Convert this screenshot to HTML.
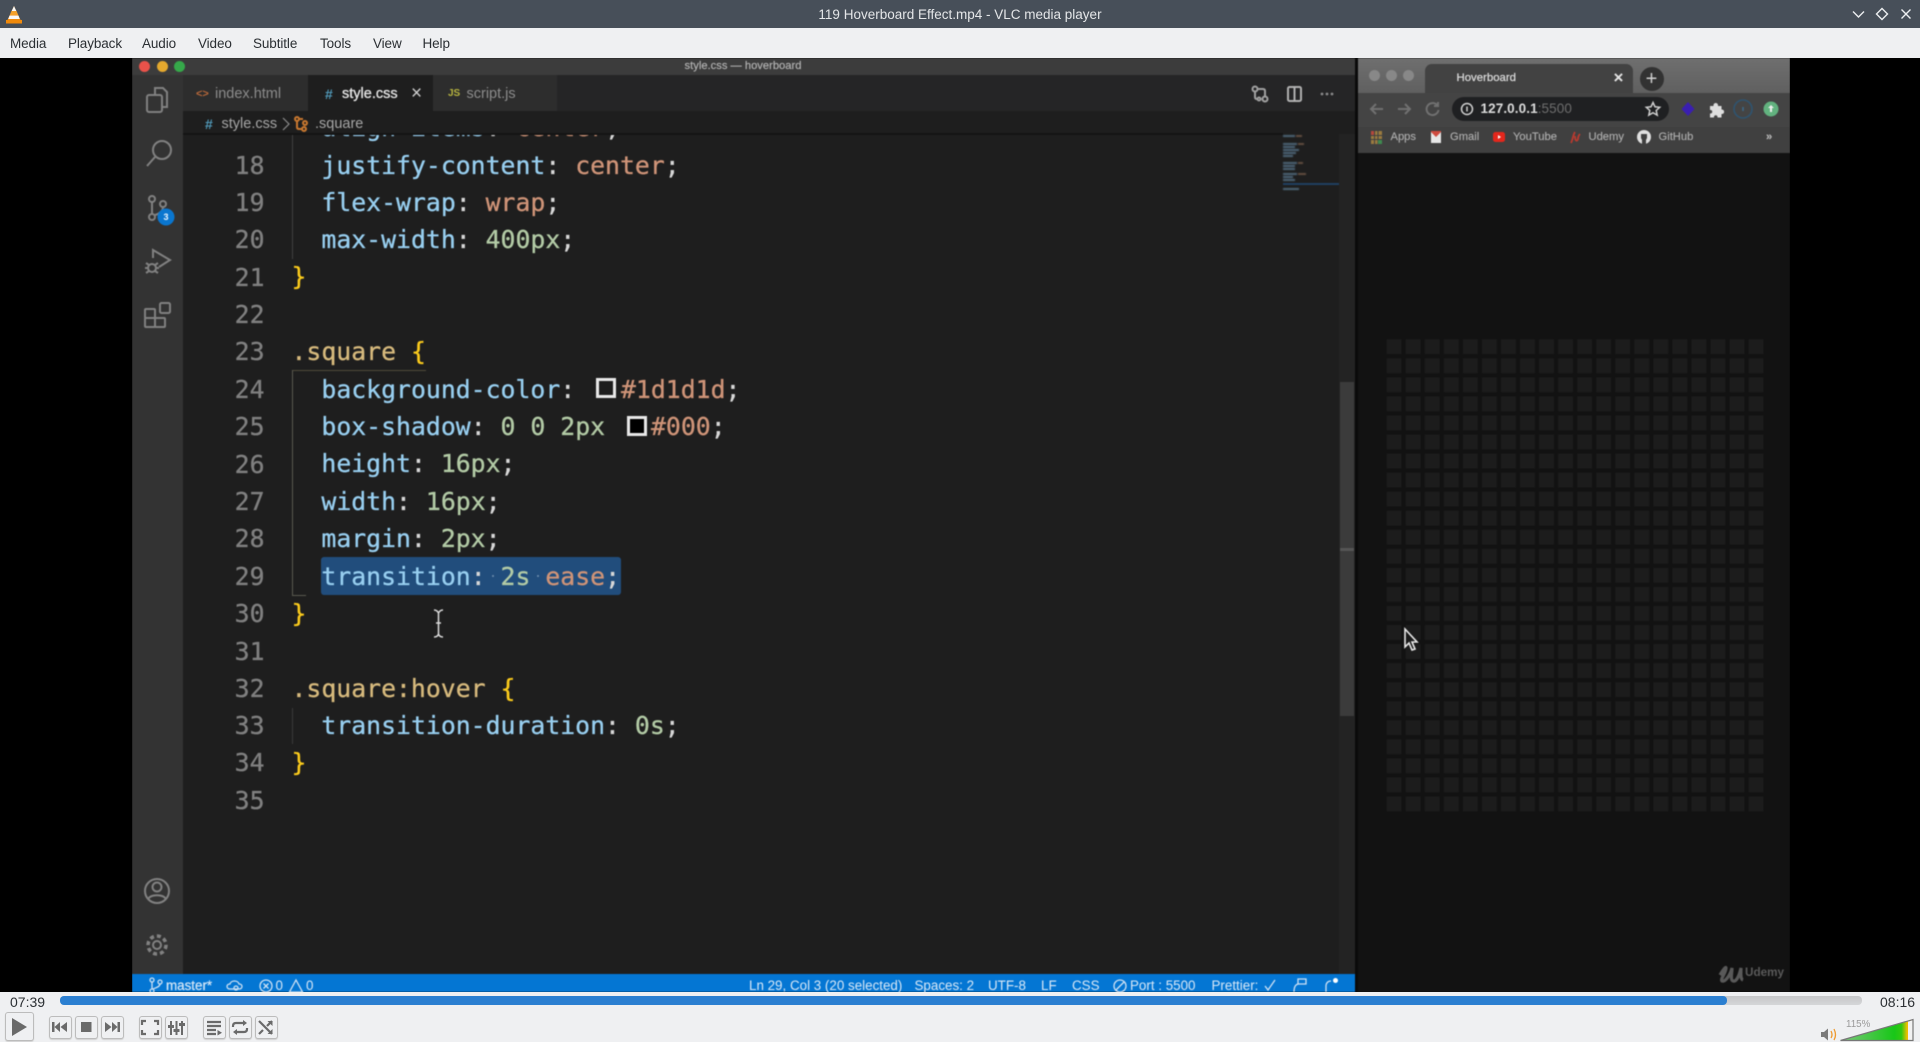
<!DOCTYPE html>
<html><head><meta charset="utf-8"><title>VLC media player</title>
<style>
html,body{margin:0;padding:0;width:1920px;height:1042px;overflow:hidden;background:#eff0f2;font-family:"Liberation Sans",sans-serif}
.a{position:absolute;white-space:pre}
#title{left:0;top:0;width:1920px;height:28px;background:#474f59}
#menu{left:0;top:28px;width:1920px;height:30px;background:#eff0f2}
.m{top:35px;font-size:13.5px;line-height:17px;color:#2b2f33;letter-spacing:-.1px}
#video{left:0;top:58px;width:1920px;height:934px;background:#000;overflow:hidden}
#clip{left:132px;top:0;width:1658px;height:934px;overflow:hidden}
#inner{left:-132px;top:-58px;width:1920px;height:1042px;filter:blur(.55px)}
.code{font-family:"DejaVu Sans Mono","Liberation Mono",monospace;font-size:24.8px;line-height:37.4px;height:37.4px;-webkit-text-stroke:.3px}
.ln{color:#808080;left:225px;width:39.5px;text-align:right}
.p{color:#98cff0}.v{color:#cf9478}.n{color:#b3cba6}.s{color:#d7ba7d}.b{color:#fbcb1c}.o{color:#d8d8d8}
.st{top:977px;font-size:13.4px;line-height:18px;color:#d9e9f8}
.bm{top:129px;font-size:11.2px;line-height:16px;color:#adadad;-webkit-text-stroke:.15px #adadad}
.btn{position:absolute;box-sizing:border-box;border:1px solid #bcbcbc;border-radius:3px;background:#eff0f2;box-shadow:0 1px 1px #d0d0d0}
</style></head><body>

<div class="a" id="title"></div>
<div class="a" style="left:0;top:6px;width:1920px;text-align:center;font-size:13.5px;line-height:18px;color:#e4e6e8">119 Hoverboard Effect.mp4 - VLC media player</div>
<div class="a" id="menu"></div>
<div class="a m" style="left:10px">Media</div>
<div class="a m" style="left:68px">Playback</div>
<div class="a m" style="left:142px">Audio</div>
<div class="a m" style="left:198px">Video</div>
<div class="a m" style="left:253px">Subtitle</div>
<div class="a m" style="left:320px">Tools</div>
<div class="a m" style="left:373px">View</div>
<div class="a m" style="left:422.5px">Help</div>

<div class="a" id="video">
<div class="a" id="clip"><div class="a" id="inner">
  <!-- VS Code -->
  <div class="a" style="left:132px;top:58px;width:1223px;height:934px;background:#1e1e1e"></div>
  <div class="a" style="left:132px;top:58px;width:1223px;height:17px;background:#3c3c3c"></div>
  <div class="a" style="left:132px;top:75px;width:51px;height:917px;background:#333"></div>
  <div class="a" style="left:183px;top:75px;width:1172px;height:36px;background:#252526"></div>
  <div class="a" style="left:183px;top:75px;width:125px;height:36px;background:#2d2d2d"></div>
  <div class="a" style="left:308px;top:75px;width:125px;height:36px;background:#1e1e1e"></div>
  <div class="a" style="left:433px;top:75px;width:124px;height:36px;background:#2d2d2d"></div>
  <div class="a" style="left:183px;top:111px;width:1172px;height:23px;background:#1e1e1e"></div>
  <div class="a" style="left:668px;top:59px;width:150px;font-size:11.2px;line-height:15px;text-align:center;color:#b4b4b4;-webkit-text-stroke:.15px #b4b4b4">style.css — hoverboard</div>
  <div class="a" style="left:139px;top:60.5px;width:11px;height:11px;border-radius:50%;background:#e9524a"></div>
  <div class="a" style="left:156.5px;top:60.5px;width:11px;height:11px;border-radius:50%;background:#e4a82e"></div>
  <div class="a" style="left:174px;top:60.5px;width:11px;height:11px;border-radius:50%;background:#36a84a"></div>

  <div class="a" style="left:196px;top:85px;font-size:11px;line-height:18px;color:#b5673a;font-weight:bold">&lt;&gt;</div>
  <div class="a" style="left:215px;top:85px;font-size:14.5px;line-height:18px;color:#8c8c8c">index.html</div>
  <div class="a" style="left:325px;top:85px;font-size:14px;line-height:18px;color:#519aba;font-weight:bold">#</div>
  <div class="a" style="left:342px;top:85px;font-size:14.5px;line-height:18px;color:#e6e6e6;-webkit-text-stroke:.3px #e6e6e6">style.css</div>
  <div class="a" style="left:411px;top:84px;font-size:19px;line-height:20px;color:#cfcfcf">×</div>
  <div class="a" style="left:448px;top:87px;font-size:10px;line-height:14px;color:#b8b53f;font-weight:bold">JS</div>
  <div class="a" style="left:466.5px;top:85px;font-size:14.5px;line-height:18px;color:#8c8c8c">script.js</div>

  <div class="a" style="left:205px;top:115px;font-size:14px;line-height:18px;color:#519aba;font-weight:bold">#</div>
  <div class="a" style="left:221.5px;top:115px;font-size:14.5px;line-height:18px;color:#a6a6a6">style.css</div>
  <div class="a" style="left:315px;top:115px;font-size:14.5px;line-height:18px;color:#a6a6a6">.square</div>

  <!-- editor -->
  <div class="a" style="left:183px;top:134px;width:1172px;height:840px;overflow:hidden">
   <div class="a" style="left:-183px;top:-134px;width:1400px;height:1000px">
    <div class="a code" style="left:321.4px;top:108.9px"><span class="p">align-items</span><span class="o">: </span><span class="v">center</span><span class="o">;</span></div>
    <div class="a code ln" style="top:146.6px">18</div>
    <div class="a code ln" style="top:183.9px">19</div>
    <div class="a code ln" style="top:221.2px">20</div>
    <div class="a code ln" style="top:258.5px">21</div>
    <div class="a code ln" style="top:295.9px">22</div>
    <div class="a code ln" style="top:333.3px">23</div>
    <div class="a code ln" style="top:370.7px">24</div>
    <div class="a code ln" style="top:408.1px">25</div>
    <div class="a code ln" style="top:445.5px">26</div>
    <div class="a code ln" style="top:482.9px">27</div>
    <div class="a code ln" style="top:520.3px">28</div>
    <div class="a code ln" style="top:557.7px">29</div>
    <div class="a code ln" style="top:595.1px">30</div>
    <div class="a code ln" style="top:632.5px">31</div>
    <div class="a code ln" style="top:669.9px">32</div>
    <div class="a code ln" style="top:707.3px">33</div>
    <div class="a code ln" style="top:744.2px">34</div>
    <div class="a code ln" style="top:782.1px">35</div>

    <div class="a" style="left:321px;top:557px;width:300px;height:38px;background:#214d7c;border-radius:3px"></div>
    <div class="a" style="left:492px;top:575px;width:2px;height:2px;border-radius:50%;background:#6d8fae"></div>
    <div class="a" style="left:537px;top:575px;width:2px;height:2px;border-radius:50%;background:#6d8fae"></div>

    <div class="a code" style="left:321.4px;top:146.6px"><span class="p">justify-content</span><span class="o">: </span><span class="v">center</span><span class="o">;</span></div>
    <div class="a code" style="left:321.4px;top:183.9px"><span class="p">flex-wrap</span><span class="o">: </span><span class="v">wrap</span><span class="o">;</span></div>
    <div class="a code" style="left:321.4px;top:221.2px"><span class="p">max-width</span><span class="o">: </span><span class="n">400px</span><span class="o">;</span></div>
    <div class="a code b" style="left:291.5px;top:258px">}</div>
    <div class="a code" style="left:291.5px;top:333.3px"><span class="s">.square </span><span class="b">{</span></div>
    <div class="a code" style="left:321.4px;top:370.7px"><span class="p">background-color</span><span class="o">: </span></div>
    <div class="a" style="left:596px;top:378px;width:14px;height:14px;border:3px solid #e8e8e8;background:#1d1d1d"></div>
    <div class="a code v" style="left:621px;top:370.7px">#1d1d1d<span class="o">;</span></div>
    <div class="a code" style="left:321.4px;top:408.1px"><span class="p">box-shadow</span><span class="o">: </span><span class="n">0 0 2px</span></div>
    <div class="a" style="left:627px;top:416px;width:14px;height:14px;border:3px solid #e8e8e8;background:#000"></div>
    <div class="a code v" style="left:651px;top:408.1px">#000<span class="o">;</span></div>
    <div class="a code" style="left:321.4px;top:445.2px"><span class="p">height</span><span class="o">: </span><span class="n">16px</span><span class="o">;</span></div>
    <div class="a code" style="left:321.4px;top:482.9px"><span class="p">width</span><span class="o">: </span><span class="n">16px</span><span class="o">;</span></div>
    <div class="a code" style="left:321.4px;top:520.3px"><span class="p">margin</span><span class="o">: </span><span class="n">2px</span><span class="o">;</span></div>
    <div class="a code" style="left:321.4px;top:557.7px"><span class="p">transition</span><span class="o">: </span><span class="n">2s </span><span class="v">ease</span><span class="o">;</span></div>
    <div class="a code b" style="left:291.5px;top:594.6px">}</div>
    <div class="a code" style="left:291.5px;top:669.9px"><span class="s">.square:hover </span><span class="b">{</span></div>
    <div class="a code" style="left:321.4px;top:707.3px"><span class="p">transition-duration</span><span class="o">: </span><span class="n">0s</span><span class="o">;</span></div>
    <div class="a code b" style="left:291.5px;top:744.2px">}</div>

    <!-- guides -->
    <div class="a" style="left:292px;top:134px;width:1px;height:125px;background:#404040"></div>
    <div class="a" style="left:292px;top:370px;width:134px;height:1px;background:#504a3a"></div>
    <div class="a" style="left:292px;top:370px;width:1px;height:225px;background:#5a5a50"></div>
    <div class="a" style="left:292px;top:595px;width:14px;height:1px;background:#5a5a50"></div>
    <div class="a" style="left:292px;top:708px;width:1px;height:36px;background:#3a3a3a"></div>
   </div>
  </div>
  <div class="a" style="left:183px;top:133px;width:1100px;height:2px;background:#131313"></div>

  <!-- minimap & scrollbar -->
  <div class="a" style="left:1339px;top:134px;width:16px;height:840px;background:#232323"></div>
  <div class="a" style="left:1340px;top:382px;width:14px;height:334px;background:#3b3b3b"></div>
  <div class="a" style="left:1340px;top:548px;width:14px;height:3px;background:#555"></div>
  <div class="a" style="left:1283px;top:183px;width:56px;height:1.5px;background:#1f3f60"></div>
  <svg class="a" style="left:0;top:0;filter:blur(.5px)" width="1920" height="1042" fill="none">
    <g stroke="#4d6678" stroke-width="2"><path d="M1283 136h12M1283 144h14M1283 147h12M1283 150h16M1283 153h13M1283 156h10M1283 163h14M1283 166h12M1283 169h12M1283 174h14M1283 177h10M1283 180h12M1283 189h16"/></g>
    <g stroke="#7a5e4c" stroke-width="1.5"><path d="M1296 136h6M1298 144h6M1298 163h5M1298 174h8"/></g>
  </svg>
  <svg class="a" style="left:0;top:0" width="1920" height="1042" fill="none">
    <!-- activity icons -->
    <g stroke="#818181" stroke-width="2">
      <rect x="147" y="95" width="15" height="17" rx="2"/>
      <path d="M155 95v-7h8l4 4v15h-5"/>
      <circle cx="162" cy="150" r="9"/><path d="M155 157l-8 9"/>
      <circle cx="152" cy="199" r="3"/><circle cx="163" cy="204" r="3"/><circle cx="152" cy="217" r="3"/><path d="M152 202v12M163 207c0 4-4 7-8 8"/>
      <path d="M153 258v-8l17 10-11 7"/><circle cx="152" cy="268" r="4"/><path d="M146 263l3 2M158 263l-3 2M145 268h3M156 268h3M146 273l3-2M158 273l-3-2"/>
      <rect x="145" y="309" width="10" height="9" rx="1"/><rect x="145" y="318" width="10" height="9" rx="1"/><rect x="155" y="318" width="10" height="9" rx="1"/><rect x="160" y="303" width="10" height="10" rx="1.5"/>
      <circle cx="157" cy="891" r="12"/><circle cx="157" cy="887" r="4.5"/><path d="M148 899c3-5 15-5 18 0"/>
      <circle cx="157" cy="945" r="4"/>
      <circle cx="157" cy="945" r="9" stroke-width="3.5" stroke-dasharray="4 3"/>
      <circle cx="1255" cy="89" r="2.5" stroke="#a0a0a0"/><circle cx="1265" cy="99" r="2.5" stroke="#a0a0a0"/><circle cx="1259" cy="99" r="1.5" stroke="#a0a0a0"/>
      <path d="M1255 92v5q0 2 2 2M1265 96v-5q0-2-2-2h-5" stroke="#a0a0a0"/>
      <rect x="1288" y="87" width="13" height="14" rx="1.5" stroke="#b0b0b0"/><path d="M1294.5 87v14" stroke="#b0b0b0"/>
    </g>
    <circle cx="166" cy="217" r="8.5" fill="#0a76cf"/>
    <g fill="#8a8a8a"><circle cx="1322" cy="94" r="1.4"/><circle cx="1327" cy="94" r="1.4"/><circle cx="1332" cy="94" r="1.4"/></g>
    <path d="M283 118l6 6-6 6" stroke="#8c8c8c" stroke-width="1.2"/>
    <g stroke="#c7772f" stroke-width="2"><circle cx="297" cy="119" r="2"/><circle cx="305" cy="123" r="2"/><circle cx="304" cy="129" r="2"/><path d="M299 119h4M297 121v6q0 2 2 2h3"/></g>
  </svg>
  <div class="a" style="left:162px;top:210.5px;width:8px;font-size:9px;line-height:13px;text-align:center;color:#e9f4ff;font-weight:bold">3</div>

  <!-- status bar -->
  <div class="a" style="left:132px;top:974px;width:1223px;height:18px;background:#0476d3"></div>
  <div class="a st" style="left:166px;-webkit-text-stroke:.2px #d9e9f8">master*</div>
  <div class="a st" style="left:275.5px">0</div>
  <div class="a st" style="left:306px">0</div>
  <div class="a st" style="left:749px">Ln 29, Col 3 (20 selected)</div>
  <div class="a st" style="left:914.5px">Spaces: 2</div>
  <div class="a st" style="left:988px">UTF-8</div>
  <div class="a st" style="left:1041px">LF</div>
  <div class="a st" style="left:1072px">CSS</div>
  <div class="a st" style="left:1130px">Port : 5500</div>
  <div class="a st" style="left:1211.5px">Prettier:</div>
  <svg class="a" style="left:0;top:0" width="1920" height="1042" fill="none" stroke="#cfe2f5" stroke-width="1.3">
    <circle cx="152" cy="980" r="2"/><circle cx="152" cy="991" r="2"/><circle cx="160" cy="982" r="2"/><path d="M152 982v7M160 984c0 3-5 4-7 5"/>
    <path d="M230 989c-4 0-4-5 0-5 1-4 8-4 9 0 4 0 4 5 0 5z"/><circle cx="236" cy="988" r="2"/>
    <circle cx="266" cy="986" r="6"/><path d="M263.5 983.5l5 5M268.5 983.5l-5 5"/>
    <path d="M296 980l6.5 12h-13z"/>
    <circle cx="1120" cy="986" r="6"/><path d="M1116 990l8-8"/>
    <path d="M1265 986l3 4 7-10"/>
    <path d="M1298 984h8v-5h-8zM1294 992c0-4 1-8 5-8"/>
    <path d="M1326 992v-6c0-3 2-5 5-5"/>
  </svg>
  <div class="a" style="left:1333px;top:978px;width:5px;height:5px;border-radius:50%;background:#fff"></div>
  <div class="a" style="left:1355px;top:58px;width:3px;height:934px;background:#0a0a0a"></div>

  <!-- Chrome -->
  <div class="a" style="left:1358px;top:58px;width:432px;height:35px;background:linear-gradient(#6f6f6f,#606060)"></div>
  <div class="a" style="left:1358px;top:93px;width:432px;height:34px;background:#444"></div>
  <div class="a" style="left:1358px;top:127px;width:432px;height:26px;background:#404040"></div>
  <div class="a" style="left:1358px;top:153px;width:432px;height:839px;background:#121212"></div>
  <div class="a" style="left:1368.5px;top:70px;width:11px;height:11px;border-radius:50%;background:#888"></div>
  <div class="a" style="left:1385.5px;top:70px;width:11px;height:11px;border-radius:50%;background:#888"></div>
  <div class="a" style="left:1403px;top:70px;width:11px;height:11px;border-radius:50%;background:#888"></div>
  <div class="a" style="left:1425px;top:64px;width:208px;height:29px;background:#424242;border-radius:7px 7px 0 0"></div>
  <div class="a" style="left:1456.5px;top:70px;font-size:11.4px;line-height:16px;color:#dedede;-webkit-text-stroke:.2px #dedede">Hoverboard</div>
  <div class="a" style="left:1613.5px;top:68px;font-size:17px;line-height:20px;color:#e6e6e6;font-weight:bold">×</div>
  <div class="a" style="left:1639.5px;top:67px;width:24px;height:24px;border-radius:50%;background:#323232"></div>
  <div class="a" style="left:1645px;top:68px;width:13px;text-align:center;font-size:20px;line-height:22px;color:#d0d0d0">+</div>
  <div class="a" style="left:1452px;top:97px;width:217px;height:24px;border-radius:12px;background:#1f2022"></div>
  <div class="a" style="left:1480.5px;top:101px;font-size:13.5px;line-height:16px;font-weight:bold;color:#dcdcdc;letter-spacing:.1px">127.0.0.1<span style="color:#6e6e6e;font-weight:normal">:5500</span></div>
  <div class="a bm" style="left:1390.5px">Apps</div>
  <div class="a bm" style="left:1450px">Gmail</div>
  <div class="a bm" style="left:1513px">YouTube</div>
  <div class="a bm" style="left:1588.5px">Udemy</div>
  <div class="a bm" style="left:1658.5px">GitHub</div>
  <div class="a bm" style="left:1766px;color:#bbb;font-weight:bold">»</div>
  <svg class="a" style="left:0;top:0" width="1920" height="1042" fill="none">
    <defs><pattern id="g" x="1386.7" y="339.3" width="19.05" height="19.05" patternUnits="userSpaceOnUse"><rect x="0" y="0" width="14.8" height="14.8" fill="#1c1c1c"/></pattern></defs>
    <rect x="1386" y="339" width="378" height="473" fill="url(#g)"/>
    <g stroke="#707070" stroke-width="2"><path d="M1383 109h-12m5-5l-5 5 5 5M1398 109h12m-5-5l5 5-5 5"/><path d="M1437 105a6 6 0 1 0 1.5 5M1438 102v4h-4"/></g>
    <circle cx="1467" cy="109" r="5.5" stroke="#d0d0d0" stroke-width="1.5"/><path d="M1467 106.5v5" stroke="#d0d0d0" stroke-width="1.5"/>
    <path d="M1653 102.5l2 4.3 4.7.5-3.5 3.2 1 4.600-4.200-2.400-4.200 2.400 1-4.600-3.500-3.200 4.700-.5z" stroke="#cfcfcf" stroke-width="1.5"/>
    <path d="M1688 102l6.500 7-6.500 7-6.500-7z" fill="#3a1fb0"/>
    <path d="M1710 106h3.500c-.5-4 5-4 4.500 0h3.500v3.500c3.500-.5 3.500 5 0 4.500v3.500h-4c.5-3-4-3-3.500 0h-4v-4c3 .5 3-4 0-3.500z" fill="#dedede"/>
    <circle cx="1743" cy="109" r="9" stroke="#2f5470" stroke-width="1.6"/><path d="M1743 107v4" stroke="#3b6b8e" stroke-width="1.5"/>
    <circle cx="1771" cy="109" r="7.500" fill="#62b27f"/><path d="M1771 105l-3 3h2v4h2v-4h2z" fill="#eee"/>
    <g><rect x="1371" y="131" width="11" height="13" fill="#9a7a3f"/><path d="M1374.500 131v13M1378 131v13" stroke="#404040"/><path d="M1371 135.500h11M1371 139.500h11" stroke="#404040"/><rect x="1371" y="131" width="3" height="4" fill="#b5473c"/><rect x="1378" y="140" width="4" height="4" fill="#3f8a4f"/></g>
    <rect x="1431" y="132" width="10" height="11" fill="#e7e7e7"/><path d="M1431 132l5 5 5-5v-1h-10z" fill="#cf4a3e"/>
    <rect x="1493" y="132" width="12" height="10" rx="2.500" fill="#e3271c"/><path d="M1498 135v4l3-2z" fill="#fff"/>
    <path d="M1571 143c2-4 2-8 4-11M1575 136c0 5 2 6 3 3 0-2 1-4 2-5" stroke="#b93a2f" stroke-width="1.800"/>
    <circle cx="1644" cy="137" r="7" fill="#e0e0e0"/><path d="M1641 134h6v4l-1 2v4h-4v-4l-1-2z" fill="#404040"/>
    <path d="M1720 975c3-5 6-9 6-7 0 5-6 11-4 13 3 1 8-5 10-13 0 5-2 12 1 13 3 1 6-4 8-13 0 4-1 11 2 12" stroke="#595959" stroke-width="3.200"/>
    <!-- mouse -->
    <path d="M1405 629v18l4-4 3 7 3-1-3-7h5z" fill="#1a1a1a" stroke="#e8e8e8" stroke-width="1.600"/>
    <path d="M434 610q3 0 4.500 3v21q-1 3-4.500 3M443 610q-3 0-4.500 3v21q1 3 4.500 3M436 623h5" stroke="#dcdcdc" stroke-width="1.500"/>
  </svg>
  <div class="a" style="left:1745px;top:964px;font-size:11.700px;line-height:18px;font-weight:bold;color:#5a5a5a">Udemy</div>
</div></div>
</div>

<!-- window controls -->
<svg class="a" style="left:0;top:0" width="1920" height="1042" fill="none">
  <path d="M14 6L6 23h16z" fill="#f08a0c"/><path d="M14 6l-3.500 7.500h7z" fill="#f8f8f8"/><path d="M11.500 11h5l1.500 4h-8z" fill="#f4a02a"/><path d="M9.600 15.500h8.800l1.400 3.500H8.200z" fill="#f8f8f8"/><rect x="6" y="20" width="16" height="3.500" fill="#f08a0c"/>
  <g stroke="#eceef0" stroke-width="1.400">
    <path d="M1853 11.500l5.500 5.500 5.500-5.500"/><path d="M1882 8.500l5.500 5.500-5.500 5.500-5.500-5.500z"/><path d="M1901.500 9.500l9 9M1910.500 9.500l-9 9"/>
  </g>
</svg>

<!-- seek -->
<div class="a" style="left:0;top:992px;width:1920px;height:50px;background:#eff0f2"></div>
<div class="a" style="left:10px;top:993px;font-size:14px;line-height:18px;color:#2b2f33">07:39</div>
<div class="a" style="left:60px;top:996px;width:1802px;height:9px;border-radius:4px;background:linear-gradient(#c6c7c9,#d5d6d8)"></div>
<div class="a" style="left:60px;top:996px;width:1667px;height:9px;border-radius:4px;background:#2b7fd1"></div>
<div class="a" style="left:1880px;top:993px;font-size:14px;line-height:18px;color:#2b2f33">08:16</div>

<!-- buttons -->
<div class="btn" style="left:5px;top:1012px;width:29px;height:29px"></div>
<div class="btn" style="left:48.500px;top:1015.500px;width:23px;height:23px"></div>
<div class="btn" style="left:74.500px;top:1015.500px;width:23px;height:23px"></div>
<div class="btn" style="left:100.500px;top:1015.500px;width:23px;height:23px"></div>
<div class="btn" style="left:138.500px;top:1015.500px;width:23px;height:23px"></div>
<div class="btn" style="left:164.500px;top:1015.500px;width:23px;height:23px"></div>
<div class="btn" style="left:202.500px;top:1015.500px;width:23px;height:23px"></div>
<div class="btn" style="left:228.500px;top:1015.500px;width:23px;height:23px"></div>
<div class="btn" style="left:254.500px;top:1015.500px;width:23px;height:23px"></div>
<svg class="a" style="left:0;top:0" width="1920" height="1042" fill="none">
  <defs><linearGradient id="vol" x1="0" x2="1"><stop offset="0" stop-color="#7ac77a"/><stop offset=".74" stop-color="#18c718"/><stop offset=".84" stop-color="#30c810"/><stop offset=".92" stop-color="#f0c000"/><stop offset="1" stop-color="#f58200"/></linearGradient></defs>
  <path d="M12 1018v18l15-9z" fill="#6a6a6a"/>
  <g fill="#6a6a6a">
    <path d="M52 1022h2.500v10H52zM60 1022v10l-5.500-5zM67 1022v10l-6.500-5z"/>
    <rect x="81" y="1022" width="10.500" height="10"/>
    <path d="M120 1022h-2.500v10h2.500zM112 1022v10l5.500-5zM105 1022v10l6.500-5z"/>
    <path d="M171 1021v14M176.500 1021v14M182 1021v14" stroke="#6a6a6a" stroke-width="2"/>
    <rect x="168" y="1025" width="6" height="3"/><rect x="173.500" y="1029" width="6" height="3"/><rect x="179" y="1023" width="6" height="3"/>
    <path d="M217.500 1030v5.500l4.500-2.700z"/>
  </g>
  <g stroke="#6a6a6a" stroke-width="2.200">
    <path d="M142 1025v-4h4M154 1021h4v4M142 1030v4h4M154 1034h4v-4"/>
    <path d="M207 1022h14M207 1026h14M207 1030h9M207 1034h9"/>
    <path d="M244 1023h-8q-3 0-3 3v1M236 1032h8q3 0 3-3v-1"/>
    <path d="M259 1021l13 13M259 1034l4-4M267 1026l5-5"/>
  </g>
  <path d="M243 1020v6l4-3zM237 1029v6l-4-3z" fill="#6a6a6a"/>
  <path d="M272.500 1021v5l-5-5zM272.500 1034v-5l-5 5z" fill="#6a6a6a"/>
  <!-- volume -->
  <path d="M1821 1032h3l4-3.500v12l-4-3.500h-3z" fill="#7a7a7a"/>
  <path d="M1831 1031q2 4 0 7M1834 1029q3 6 0 11" stroke="#ee9a30" stroke-width="1.300"/>
  <path d="M1841 1040l72-20v20z" fill="url(#vol)"/>
  <path d="M1908 1021.500l5-1.500v20h-5z" fill="#f2f2f2"/>
  <path d="M1840.500 1040.500l72.500-21v21z" stroke="#777" stroke-width="1.200"/>
</svg>
<div class="a" style="left:1846px;top:1019px;font-size:9.800px;line-height:12px;color:#9a9a9a">115%</div>
</body></html>
